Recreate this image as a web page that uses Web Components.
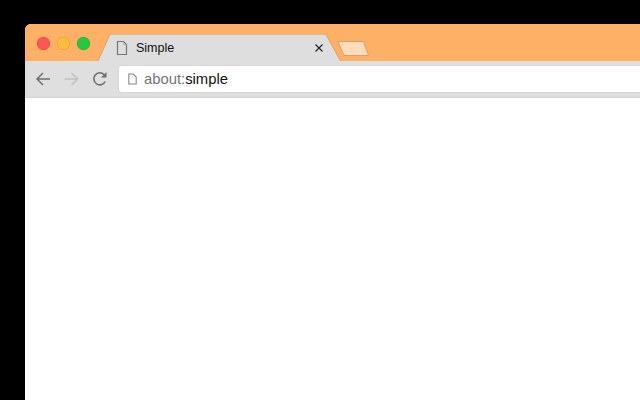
<!DOCTYPE html>
<html lang="en"><head><meta charset="utf-8"><title>Simple</title>
<style>
html,body{margin:0;height:100%;background:#000;overflow:hidden}
body{padding:24px 0 0 25px;box-sizing:border-box;font-family:"Liberation Sans",Arial,sans-serif}
</style></head><body>
<browser-window>
  <tab-strip>
    <traffic-light slot="lights" style="--c:#fc5753;--b:#e0443e"></traffic-light>
    <traffic-light slot="lights" style="--c:#fdbc40;--b:#dea123"></traffic-light>
    <traffic-light slot="lights" style="--c:#27c83f;--b:#1aab29"></traffic-light>
    <browser-tab slot="tab">Simple</browser-tab>
    <new-tab-button slot="new"></new-tab-button>
  </tab-strip>
  <nav-bar>
    <address-box><span style="color:#757575">about:</span>simple</address-box>
  </nav-bar>
</browser-window>
<script>
function def(name, html){
  customElements.define(name, class extends HTMLElement{
    constructor(){super();this.attachShadow({mode:'open'}).innerHTML=html;}
  });
}
def('browser-window',`<style>:host{display:flex;flex-direction:column;width:615px;height:376px;background:#fff;border-radius:6px 0 0 0;overflow:hidden}</style><slot></slot>`);
def('tab-strip',`<style>
:host{display:flex;height:37px;background:#ffb067;flex:none;box-sizing:border-box}
.l{display:flex;gap:7px;padding:13px 0 0 12px;width:61px;flex:none}
.t{display:flex;align-self:flex-end}
.n{margin:16px 0 0 -4px}
</style><div class="l"><slot name="lights"></slot></div><div class="t"><slot name="tab"></slot></div><div class="n"><slot name="new"></slot></div>`);
def('traffic-light',`<style>:host{display:block;width:13px;height:13px;border-radius:50%;background:var(--c);box-shadow:inset 0 0 0 .5px var(--b)}</style>`);
def('browser-tab',`<style>
:host{display:flex;position:relative;width:243px;height:27px;align-items:center;box-sizing:border-box;padding:0 18px 0 18px;font-size:12.5px;color:#111}
svg.bg{position:absolute;left:0;top:0}
.i,.s,.x{position:relative}
.i{display:flex;margin-right:8px}
.s{flex:1}
.x{display:flex}
</style>
<svg class="bg" width="243" height="27" viewBox="0 0 243 27"><path d="M0 27L11.5 1.5Q12 0 14 0H226Q227.5 0 228.5 1.5L242.5 27Z" fill="#dedede"/><path d="M0 27L11.5 1.5Q12 .2 14 .2H226Q227.5 .2 228.5 1.5L242.5 27" fill="none" stroke="#d9944f" stroke-width=".7"/></svg>
<span class="i"><svg width="12" height="16" viewBox="0 0 12 16" fill="none" stroke="#757575" stroke-width="1.2"><path d="M1.5 1.5H7.5L10.5 4.5V14.5H1.5Z"/><path d="M7.5 1.5V4.5H10.5" stroke="#aaa" stroke-width=".7"/></svg></span><span class="s"><slot></slot></span>
<span class="x"><svg width="8" height="8" viewBox="0 0 8 8" stroke="#222" stroke-width="1.1"><path d="M.5 .5L7.5 7.5M7.5 .5L.5 7.5"/></svg></span>`);
def('new-tab-button',`<style>:host{display:block;width:33px;height:17px}</style><svg width="33" height="17" viewBox="0 0 33 17" style="display:block"><path d="M1 1.5H26.5L31.5 15.5H7Z" fill="#ffdcbc" stroke="#d9a06a" stroke-width="1" stroke-linejoin="round"/></svg>`);
def('nav-bar',`<style>
:host{display:flex;height:37px;flex:none;background:#dfdfdf;box-sizing:border-box;padding:5px 0 5px 11px;border-bottom:1px solid #d4d4d4}
.b{display:flex;width:28px;align-items:center;flex:none}
svg{display:block}
.w{flex:1;display:flex;min-width:0;margin-left:-1px}
</style>
<div class="b"><svg width="16" height="16" viewBox="0 0 16 16" fill="none" stroke="#6e6e6e" stroke-width="1.5"><path d="M14 8H1M7 2L1 8L7 14"/></svg></div>
<div class="b"><svg width="16" height="16" viewBox="0 0 16 16" fill="none" stroke="#c2c2c2" stroke-width="1.5"><path d="M.5 8H13.5M7.5 2L13.5 8L7.5 14"/></svg></div>
<div class="b"><svg width="16" height="16" viewBox="0 0 16 16" fill="none" stroke="#6e6e6e" stroke-width="1.6"><path d="M13.2 10.5A6 6 0 1 1 12.2 3.7"/><path d="M14.5 1L14.5 6.5L9 6.5Z" fill="#6e6e6e" stroke="none"/></svg></div>
<div class="w"><slot></slot></div>`);
def('address-box',`<style>
:host{display:flex;flex:1;align-items:center;background:#fff;border-radius:3px 0 0 3px;box-sizing:border-box;padding:0 0 0 9px;font-size:14.8px;color:#111;box-shadow:0 0 0 .5px #d0d0d0}
svg{display:block;margin-right:7px}
</style><svg width="9" height="12" viewBox="0 0 9 12" fill="none" stroke="#8a8a8a" stroke-width="1.1"><path d="M.8 1H5.2L8.2 4V11H.8Z"/></svg><span><slot></slot></span>`);
</script>
</body></html>
